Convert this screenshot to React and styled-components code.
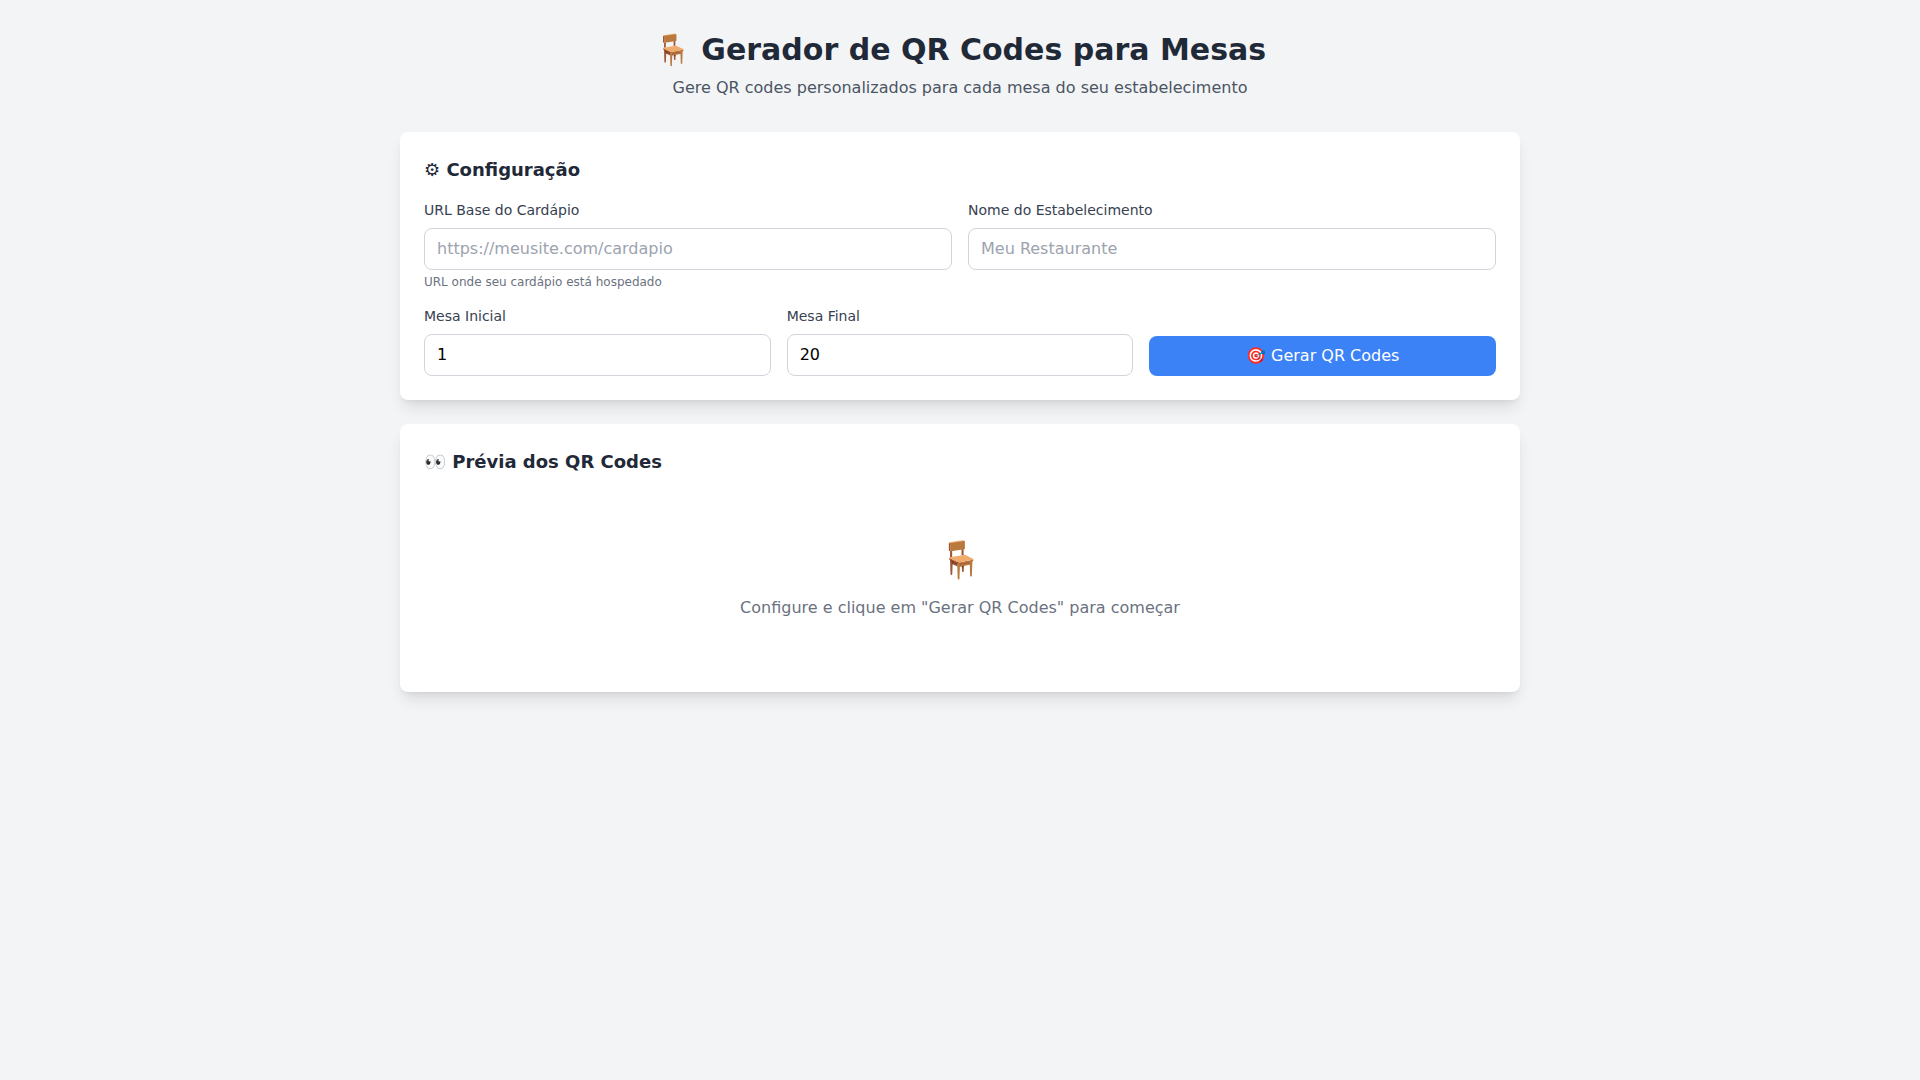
import React, { useState } from "react";
import styled, { createGlobalStyle, css } from "styled-components";

const GlobalStyle = createGlobalStyle`
  *, *::before, *::after {
    box-sizing: border-box;
  }

  body {
    margin: 0;
    min-height: 100vh;
    background-color: #f3f4f6;
    font-family: "DejaVu Sans", sans-serif;
    font-size: 16px;
    line-height: 24px;
  }

  h1, h2, p {
    margin: 0;
  }
`;

const Container = styled.main`
  max-width: 1152px;
  margin: 0 auto;
  padding: 32px 16px;
`;

const Header = styled.header`
  margin-bottom: 32px;
  text-align: center;
`;

const Title = styled.h1`
  margin-bottom: 8px;
  color: #1f2937;
  font-size: 30px;
  font-weight: 700;
  line-height: 36px;
`;

const Subtitle = styled.p`
  color: #4b5563;
`;

const Card = styled.section`
  margin-bottom: 24px;
  padding: 24px;
  border-radius: 8px;
  background-color: #fff;
  box-shadow: 0 10px 15px -3px rgba(0, 0, 0, 0.1),
    0 4px 6px -4px rgba(0, 0, 0, 0.1);
`;

const CardTitle = styled.h2`
  margin-bottom: 16px;
  color: #1f2937;
  font-size: 18px;
  font-weight: 600;
  line-height: 28px;
`;

const FieldGrid = styled.div`
  display: grid;
  grid-template-columns: repeat(${(props) => props.$columns}, 1fr);
  gap: 16px;
  margin-top: 16px;
`;

const Label = styled.label`
  display: block;
  margin-bottom: 8px;
  color: #374151;
  font-size: 14px;
  line-height: 20px;
`;

const controlStyle = css`
  width: 100%;
  border-radius: 8px;
  font-family: inherit;
  font-size: 16px;
  line-height: 24px;
`;

const Input = styled.input`
  ${controlStyle}
  display: block;
  padding: 8px 12px;
  border: 1px solid #d1d5db;
  background-color: #fff;
  color: #000;

  &::placeholder {
    color: #9ca3af;
    opacity: 1;
  }

  &:focus {
    outline: 2px solid #3b82f6;
  }
`;

const Hint = styled.p`
  margin-top: 4px;
  color: #6b7280;
  font-size: 12px;
  line-height: 16px;
`;

const GenerateButton = styled.button`
  ${controlStyle}
  align-self: end;
  padding: 8px 16px;
  border: none;
  background-color: #3b82f6;
  color: #fff;
  cursor: pointer;

  &:hover {
    background-color: #2563eb;
  }
`;

const EmptyState = styled.div`
  padding: 48px 0;
  color: #6b7280;
  text-align: center;
`;

const EmptyIcon = styled.div`
  margin-bottom: 16px;
  font-size: 36px;
  line-height: 40px;
`;

const App = () => {
  const [config, setConfig] = useState({
    baseUrl: "",
    name: "",
    first: "1",
    last: "20",
  });

  const handleChange = (e) => {
    setConfig({ ...config, [e.target.name]: e.target.value });
  };

  return (
    <>
      <GlobalStyle />
      <Container>
        <Header>
          <Title>🪑 Gerador de QR Codes para Mesas</Title>
          <Subtitle>
            Gere QR codes personalizados para cada mesa do seu estabelecimento
          </Subtitle>
        </Header>

        <Card>
          <CardTitle>⚙ Configuração</CardTitle>
          <FieldGrid $columns={2}>
            <div>
              <Label htmlFor="baseUrl">URL Base do Cardápio</Label>
              <Input
                id="baseUrl"
                name="baseUrl"
                type="url"
                placeholder="https://meusite.com/cardapio"
                value={config.baseUrl}
                onChange={handleChange}
              />
              <Hint>URL onde seu cardápio está hospedado</Hint>
            </div>
            <div>
              <Label htmlFor="name">Nome do Estabelecimento</Label>
              <Input
                id="name"
                name="name"
                type="text"
                placeholder="Meu Restaurante"
                value={config.name}
                onChange={handleChange}
              />
            </div>
          </FieldGrid>
          <FieldGrid $columns={3}>
            <div>
              <Label htmlFor="first">Mesa Inicial</Label>
              <Input
                id="first"
                name="first"
                type="number"
                min="1"
                value={config.first}
                onChange={handleChange}
              />
            </div>
            <div>
              <Label htmlFor="last">Mesa Final</Label>
              <Input
                id="last"
                name="last"
                type="number"
                min="1"
                value={config.last}
                onChange={handleChange}
              />
            </div>
            <GenerateButton type="button">🎯 Gerar QR Codes</GenerateButton>
          </FieldGrid>
        </Card>

        <Card>
          <CardTitle>👀 Prévia dos QR Codes</CardTitle>
          <EmptyState>
            <EmptyIcon>🪑</EmptyIcon>
            <p>Configure e clique em "Gerar QR Codes" para começar</p>
          </EmptyState>
        </Card>
      </Container>
    </>
  );
};

export default App;
